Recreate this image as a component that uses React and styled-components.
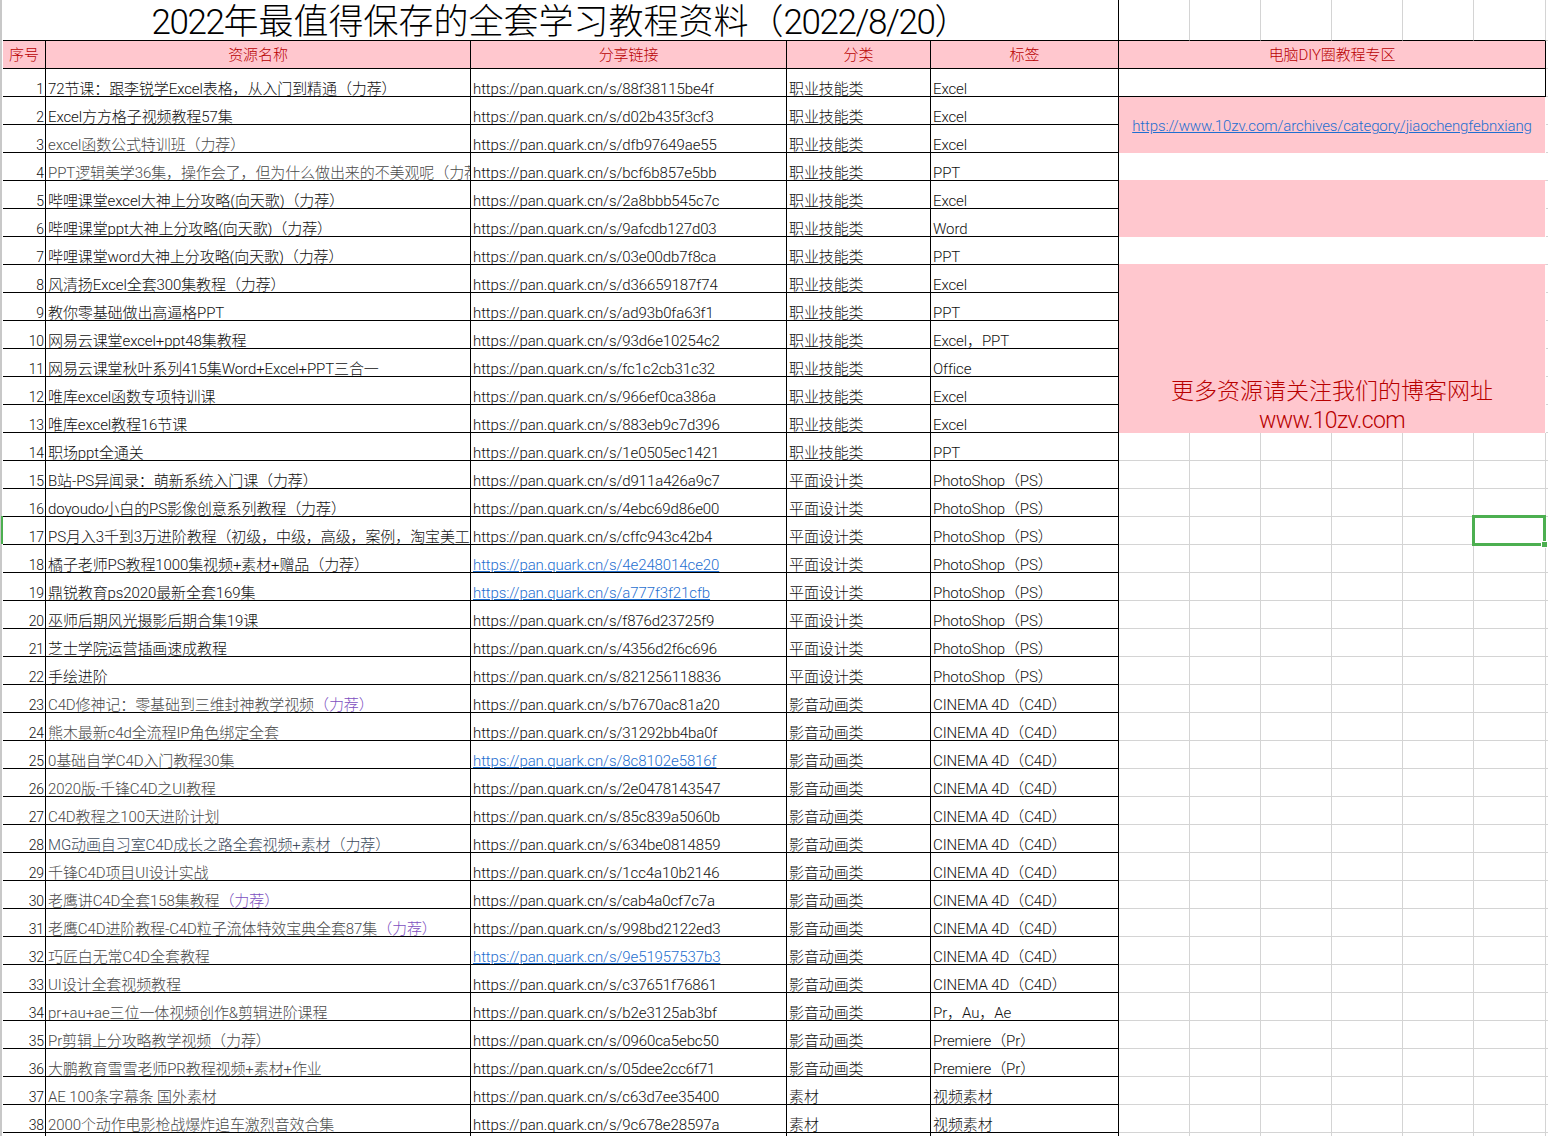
import React from 'react';
import styled, { createGlobalStyle } from 'styled-components';

const GlobalStyle = createGlobalStyle`
  html, body {
    margin: 0;
    height: 100%;
    overflow: hidden;
    background: #fff;
  }
  body {
    font-family: Roboto, "Noto Sans CJK SC", sans-serif;
    font-size: 15px;
    font-weight: 300;
    letter-spacing: -0.1px;
    color: #111;
  }
`;

const PINK = '#ffc7ce';
const HEAD_RED = '#b80000';
const GRID = '#d4d4d4';

const Sheet = styled.div`
  display: flex;
  height: 1136px;
  overflow: hidden;
`;

const Gutter = styled.div`
  position: relative;
  flex: 0 0 3px;
  &::before {
    content: '';
    position: absolute;
    top: 0;
    bottom: 0;
    left: 0;
    width: 2px;
    background: #c8c8c8;
  }
`;

const GutterMark = styled.div`
  position: absolute;
  top: 516px;
  left: 1px;
  width: 2px;
  height: 28px;
  background: #4caf50;
`;

const Table = styled.table`
  flex: none;
  width: 1545px;
  border-collapse: separate;
  border-spacing: 0;
  table-layout: fixed;
`;

const Cell = styled.td`
  box-sizing: border-box;
  height: 28px;
  padding: 0 0 0 2px;
  border-right: 1px solid #000;
  border-bottom: 1px solid #000;
  vertical-align: bottom;
  white-space: nowrap;
  overflow: hidden;
  line-height: 14px;
  color: ${({ $tone }) => $tone || '#111'};
`;

const NumCell = styled(Cell)`
  padding: 0 1px 0 0;
  text-align: right;
  font-size: 14px;
`;

const HeadCell = styled.th`
  box-sizing: border-box;
  height: 28px;
  padding: 2px 0 0;
  border-right: 1px solid #000;
  border-bottom: 1px solid #000;
  background: ${PINK};
  color: ${HEAD_RED};
  font-weight: 300;
  font-size: 15px;
  line-height: 25px;
`;

const TitleCell = styled.td`
  box-sizing: border-box;
  height: 41px;
  padding: 0;
  border-right: 1px solid #000;
  border-bottom: 1px solid #000;
  text-align: center;
  vertical-align: bottom;
  font-size: 35px;
  letter-spacing: 0;
  line-height: 34px;
  color: #000;
  white-space: nowrap;
`;

const Figures = styled.span`
  letter-spacing: -1.4px;
`;

const GridCell = styled.td`
  position: relative;
  box-sizing: border-box;
  padding: 0;
  border-right: ${({ $edge }) => ($edge ? 'none' : `1px solid ${GRID}`)};
  border-bottom: 1px solid ${({ $ink }) => $ink || GRID};
`;

const Selection = styled.div`
  position: absolute;
  top: -2px;
  left: -2px;
  right: -1px;
  bottom: -2px;
  border: 3px solid #4caf50;
  z-index: 2;
  &::after {
    content: '';
    position: absolute;
    right: -5px;
    bottom: -5px;
    width: 5px;
    height: 5px;
    border: 1px solid #fff;
    background: #4caf50;
  }
`;

const BoxCell = styled.td`
  box-sizing: border-box;
  padding: 0;
  border-right: 1px solid #000;
  border-bottom: 1px solid #000;
`;

const BlankCell = styled.td`
  padding: 0;
`;

const PinkCell = styled.td`
  box-sizing: border-box;
  padding: 0;
  border-right: 1px solid #fff;
  background: ${PINK};
  text-align: center;
  vertical-align: ${({ $align }) => $align || 'middle'};
  box-shadow: ${({ $bleed }) => ($bleed ? `0 -1px 0 ${PINK}` : 'none')};
`;

const Link = styled.a`
  color: #1f6fd0;
  text-decoration: underline;
`;

const SideLink = styled(Link)`
  display: block;
  padding-top: 2px;
  line-height: 20px;
`;

const Promo = styled.div`
  margin-bottom: -2px;
  color: ${HEAD_RED};
  font-size: 23px;
  letter-spacing: 0;
  line-height: 29px;
`;

const PromoSite = styled.span`
  letter-spacing: -0.6px;
`;

const Recommend = styled.span`
  color: #7d4fc0;
`;

const INK = '#111111';
const DIM = '#4a4a4a';
const SLATE = '#404c5c';

const nameRows = [
  ['72节课：跟李锐学Excel表格，从入门到精通（力荐）', INK],
  ['Excel方方格子视频教程57集', INK],
  ['excel函数公式特训班（力荐）', DIM],
  ['PPT逻辑美学36集，操作会了，但为什么做出来的不美观呢（力荐）', DIM],
  ['哔哩课堂excel大神上分攻略(向天歌)（力荐）', INK],
  ['哔哩课堂ppt大神上分攻略(向天歌)（力荐）', INK],
  ['哔哩课堂word大神上分攻略(向天歌)（力荐）', INK],
  ['风清扬Excel全套300集教程（力荐）', INK],
  ['教你零基础做出高逼格PPT', INK],
  ['网易云课堂excel+ppt48集教程', INK],
  ['网易云课堂秋叶系列415集Word+Excel+PPT三合一', INK],
  ['唯库excel函数专项特训课', INK],
  ['唯库excel教程16节课', INK],
  ['职场ppt全通关', INK],
  ['B站-PS异闻录：萌新系统入门课（力荐）', INK],
  ['doyoudo小白的PS影像创意系列教程（力荐）', INK],
  ['PS月入3千到3万进阶教程（初级，中级，高级，案例，淘宝美工', INK],
  ['橘子老师PS教程1000集视频+素材+赠品（力荐）', INK],
  ['鼎锐教育ps2020最新全套169集', INK],
  ['巫师后期风光摄影后期合集19课', INK],
  ['芝士学院运营插画速成教程', INK],
  ['手绘进阶', INK],
  ['C4D修神记：零基础到三维封神教学视频', DIM, true],
  ['熊木最新c4d全流程IP角色绑定全套', DIM],
  ['0基础自学C4D入门教程30集', DIM],
  ['2020版-千锋C4D之UI教程', DIM],
  ['C4D教程之100天进阶计划', DIM],
  ['MG动画自习室C4D成长之路全套视频+素材（力荐）', SLATE],
  ['千锋C4D项目UI设计实战', DIM],
  ['老鹰讲C4D全套158集教程', DIM, true],
  ['老鹰C4D进阶教程-C4D粒子流体特效宝典全套87集', DIM, true],
  ['巧匠白无常C4D全套教程', DIM],
  ['UI设计全套视频教程', DIM],
  ['pr+au+ae三位一体视频创作&剪辑进阶课程', DIM],
  ['Pr剪辑上分攻略教学视频（力荐）', DIM],
  ['大鹏教育雪雪老师PR教程视频+素材+作业', DIM],
  ['AE 100条字幕条 国外素材', DIM],
  ['2000个动作电影枪战爆炸追车激烈音效合集', DIM],
];

const hashes = [
  '88f38115be4f', 'd02b435f3cf3', 'dfb97649ae55', 'bcf6b857e5bb', '2a8bbb545c7c', '9afcdb127d03',
  '03e00db7f8ca', 'd36659187f74', 'ad93b0fa63f1', '93d6e10254c2', 'fc1c2cb31c32', '966ef0ca386a',
  '883eb9c7d396', '1e0505ec1421', 'd911a426a9c7', '4ebc69d86e00', 'cffc943c42b4', '4e248014ce20',
  'a777f3f21cfb', 'f876d23725f9', '4356d2f6c696', '821256118836', 'b7670ac81a20', '31292bb4ba0f',
  '8c8102e5816f', '2e0478143547', '85c839a5060b', '634be0814859', '1cc4a10b2146', 'cab4a0cf7c7a',
  '998bd2122ed3', '9e51957537b3', 'c37651f76861', 'b2e3125ab3bf', '0960ca5ebc50', '05dee2cc6f71',
  'c63d7ee35400', '9c678e28597a',
];

// rows whose share link is still styled as a hyperlink
const linkedRows = [18, 19, 25, 32];

const categoryOf = (n) => {
  if (n <= 14) return '职业技能类';
  if (n <= 22) return '平面设计类';
  if (n <= 36) return '影音动画类';
  return '素材';
};

const firstTags = [
  'Excel', 'Excel', 'Excel', 'PPT', 'Excel', 'Word', 'PPT', 'Excel', 'PPT',
  'Excel，PPT', 'Office', 'Excel', 'Excel', 'PPT',
];

const tagOf = (n) => {
  if (n <= 14) return firstTags[n - 1];
  if (n <= 22) return 'PhotoShop（PS）';
  if (n <= 33) return 'CINEMA 4D（C4D）';
  if (n === 34) return 'Pr，Au，Ae';
  if (n <= 36) return 'Premiere（Pr）';
  return '视频素材';
};

const SELECTED_ROW = 17;

const GridCells = ({ n }) => (
  <>
    {[0, 1, 2, 3, 4, 5].map((i) => (
      <GridCell key={i}>
        {n === SELECTED_ROW && i === 5 && <Selection />}
      </GridCell>
    ))}
  </>
);

// what sits right of the table: merged cells for the first 13 rows, empty grid after
const SideCells = ({ n }) => {
  switch (n) {
    case 1:
      return <BoxCell colSpan={6} />;
    case 2:
      return (
        <PinkCell colSpan={6} rowSpan={2}>
          <SideLink href="#">https://www.10zv.com/archives/category/jiaochengfebnxiang</SideLink>
        </PinkCell>
      );
    case 4:
    case 7:
      return <BlankCell colSpan={6} />;
    case 5:
      return <PinkCell colSpan={6} rowSpan={2} $bleed />;
    case 8:
      return (
        <PinkCell colSpan={6} rowSpan={6} $align="bottom" $bleed>
          <Promo>
            更多资源请关注我们的博客网址
            <br />
            <PromoSite>www.10zv.com</PromoSite>
          </Promo>
        </PinkCell>
      );
    case 3:
    case 6:
    case 9:
    case 10:
    case 11:
    case 12:
    case 13:
      return null;
    default:
      return <GridCells n={n} />;
  }
};

const Row = ({ n }) => {
  const [name, tone, recommended] = nameRows[n - 1];
  const url = `https://pan.quark.cn/s/${hashes[n - 1]}`;
  return (
    <tr>
      <NumCell>{n}</NumCell>
      <Cell $tone={tone}>
        {name}
        {recommended && <Recommend>（力荐）</Recommend>}
      </Cell>
      <Cell>{linkedRows.includes(n) ? <Link href="#">{url}</Link> : url}</Cell>
      <Cell>{categoryOf(n)}</Cell>
      <Cell>{tagOf(n)}</Cell>
      <SideCells n={n} />
      <GridCell $edge />
    </tr>
  );
};

const App = () => (
  <Sheet>
    <GlobalStyle />
    <Gutter>
      <GutterMark />
    </Gutter>
    <Table>
      <colgroup>
        <col style={{ width: 43 }} />
        <col style={{ width: 425 }} />
        <col style={{ width: 316 }} />
        <col style={{ width: 144 }} />
        <col style={{ width: 188 }} />
        <col style={{ width: 71 }} />
        <col style={{ width: 71 }} />
        <col style={{ width: 71 }} />
        <col style={{ width: 71 }} />
        <col style={{ width: 71 }} />
        <col style={{ width: 72 }} />
        <col style={{ width: 3 }} />
      </colgroup>
      <tbody>
        <tr>
          <TitleCell colSpan={5}>
            <Figures>2022</Figures>年最值得保存的全套学习教程资料（<Figures>2022/8/20</Figures>）
          </TitleCell>
          {[0, 1, 2, 3, 4, 5].map((i) => (
            <GridCell key={i} $ink="#000" />
          ))}
          <GridCell $edge />
        </tr>
        <tr>
          <HeadCell>序号</HeadCell>
          <HeadCell>资源名称</HeadCell>
          <HeadCell>分享链接</HeadCell>
          <HeadCell>分类</HeadCell>
          <HeadCell>标签</HeadCell>
          <HeadCell colSpan={6}>电脑DIY圈教程专区</HeadCell>
          <GridCell $edge />
        </tr>
        {nameRows.map((_, i) => (
          <Row key={i} n={i + 1} />
        ))}
        <tr>
          <Cell />
          <Cell />
          <Cell />
          <Cell />
          <Cell />
          <GridCells n={39} />
          <GridCell $edge />
        </tr>
      </tbody>
    </Table>
  </Sheet>
);

export default App;
